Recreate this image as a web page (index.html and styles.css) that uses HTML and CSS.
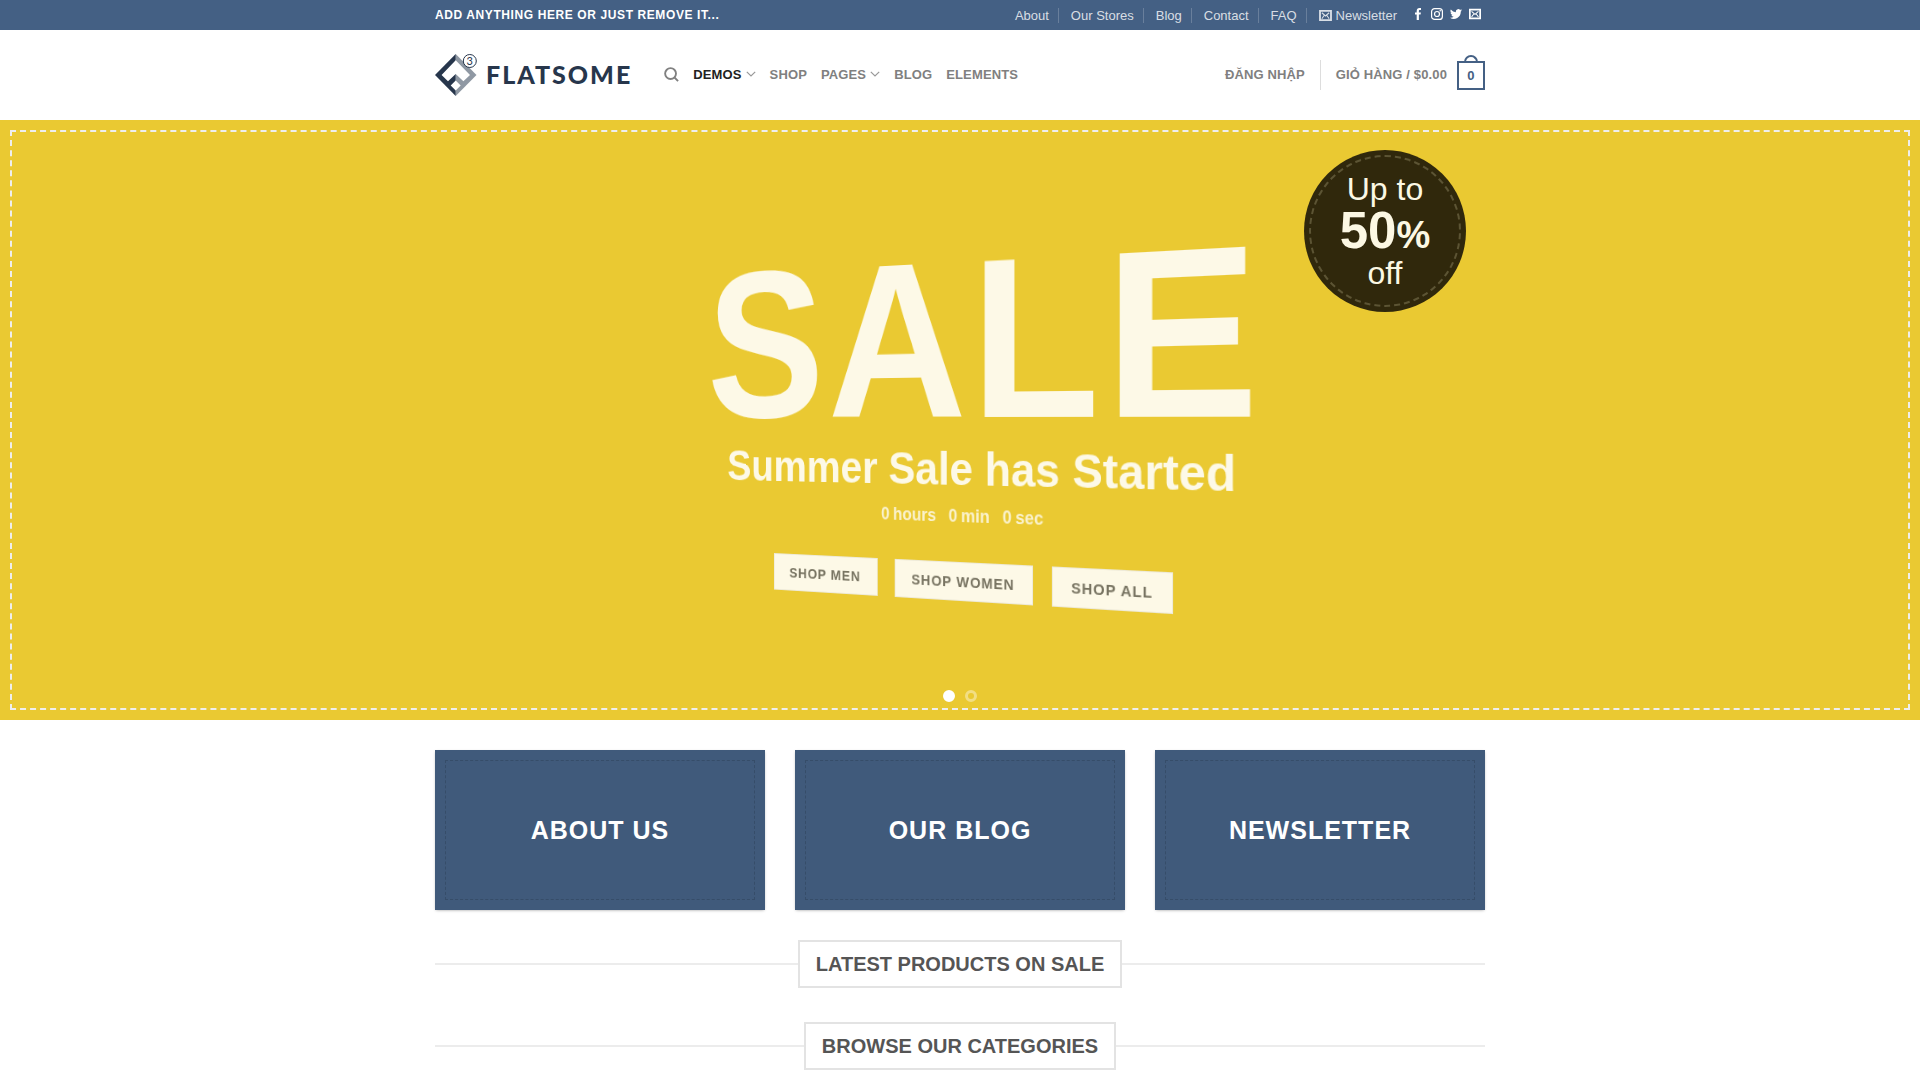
FILE: index.html
```html
<!DOCTYPE html>
<html lang="vi">
<head>
<meta charset="utf-8">
<meta name="viewport" content="width=device-width, initial-scale=1">
<title>Flatsome</title>
<link rel="stylesheet" href="styles.css">
</head>
<body>
<svg class="sprite" aria-hidden="true">
  <symbol id="envelope" viewBox="0 0 14 12">
    <path fill="none" stroke="currentColor" stroke-width="2" d="M1 1h12v10H1z"/>
    <path fill="none" stroke="currentColor" stroke-width="1.200" d="M3 3l4 3.500 4-3.500M3 9.500l2.500-3.500M11 9.500L8.500 6"/>
  </symbol>
  <symbol id="chevron" viewBox="0 0 10 6">
    <path fill="none" stroke="currentColor" stroke-width="1.200" d="M.8.8L5 5 9.200.8"/>
  </symbol>
</svg>
<header>
  <div class="topbar">
    <div class="container topbar-row">
      <strong class="topbar-note">ADD ANYTHING HERE OR JUST REMOVE IT...</strong>
      <nav class="topbar-nav" aria-label="Top">
        <a href="#">About</a>
        <a href="#">Our Stores</a>
        <a href="#">Blog</a>
        <a href="#">Contact</a>
        <a href="#">FAQ</a>
        <a href="#"><svg class="mail-icon"><use href="#envelope"/></svg>Newsletter</a>
      </nav>
      <div class="social">
        <a href="#" aria-label="Facebook"><svg viewBox="0 0 12 12"><path fill="currentColor" d="M4.700 12V6.600H3V4.400h1.700V2.900C4.700 1 5.800 0 7.400 0c.8 0 1.400.1 1.600.1V2H7.900c-.9 0-1 .4-1 1v1.400h2L8.600 6.600H6.900V12z"/></svg></a>
        <a href="#" aria-label="Instagram"><svg viewBox="0 0 12 12"><rect x=".6" y=".6" width="10.800" height="10.800" rx="3" fill="none" stroke="currentColor" stroke-width="1.200"/><circle cx="6" cy="6" r="2.500" fill="none" stroke="currentColor" stroke-width="1.200"/><circle cx="9.200" cy="2.800" r=".8" fill="currentColor"/></svg></a>
        <a href="#" aria-label="Twitter"><svg viewBox="0 0 24 24"><path fill="currentColor" d="M24 4.600a10 10 0 0 1-2.800.8 4.900 4.900 0 0 0 2.200-2.700 10 10 0 0 1-3.100 1.200 4.900 4.900 0 0 0-8.400 4.500A14 14 0 0 1 1.700 3.100a4.900 4.900 0 0 0 1.500 6.600 4.900 4.900 0 0 1-2.200-.6v.1a4.900 4.900 0 0 0 3.900 4.800 5 5 0 0 1-2.200.1 4.900 4.900 0 0 0 4.600 3.400A9.900 9.900 0 0 1 0 19.500a14 14 0 0 0 21.500-12.400A10 10 0 0 0 24 4.600z"/></svg></a>
        <a href="#" aria-label="Email"><svg><use href="#envelope"/></svg></a>
      </div>
    </div>
  </div>
  <div class="container masthead">
    <a class="logo" href="#" aria-label="Flatsome">
      <svg viewBox="0 0 44 44" class="logo-mark" aria-hidden="true">
        <path fill="#8f98a3" d="M20.700 1l20.800 21-20.800 21z"/>
        <path fill="#27364c" d="M20.700 1v42L0 22z"/>
        <path fill="#fff" d="M20.700 7.300L35 22l-6.600 6.300-7.700-7.300-7.700 7.300L6.600 22z"/>
        <path fill="#fff" d="M20.700 27.500l5 4.900-5 5-5-5z"/>
        <circle cx="34.800" cy="8" r="6.500" fill="#fff" stroke="#27364c" stroke-width="1"/>
        <text x="34.800" y="12" text-anchor="middle" class="logo-version">3</text>
      </svg>
      <span class="logo-text">FLATSOME</span>
    </a>
    <nav class="main-nav" aria-label="Main">
      <a href="#" aria-label="Search"><svg class="search-icon" viewBox="0 0 16 16"><g fill="none" stroke="currentColor" stroke-width="2"><circle cx="7" cy="7" r="5.800"/><path d="M11.200 11.200L15 15"/></g></svg></a>
      <a href="#" class="active">DEMOS<svg class="chevron"><use href="#chevron"/></svg></a>
      <a href="#">SHOP</a>
      <a href="#">PAGES<svg class="chevron"><use href="#chevron"/></svg></a>
      <a href="#">BLOG</a>
      <a href="#">ELEMENTS</a>
    </nav>
    <nav class="account-nav" aria-label="Account">
      <a href="#"><span class="account-label">ĐĂNG NHẬP</span></a>
      <a href="#" class="cart"><span class="account-label">GIỎ HÀNG / $0.00</span><span class="cart-count">0</span></a>
    </nav>
  </div>
</header>
<main>
  <section class="hero">
    <div class="hero-frame"></div>
    <div class="container hero-inner">
      <div class="hero-text">
        <h1>SALE</h1>
        <h2>Summer Sale has Started</h2>
        <div class="timer">
          <span><b>0</b>hours</span><span><b>0</b>min</span><span><b>0</b>sec</span>
        </div>
        <div class="hero-buttons">
          <button type="button">SHOP MEN</button>
          <button type="button">SHOP WOMEN</button>
          <button type="button">SHOP ALL</button>
        </div>
      </div>
      <div class="badge">
        <span>Up to</span>
        <strong>50<small>%</small></strong>
        <span>off</span>
      </div>
    </div>
    <div class="dots">
      <button type="button" class="dot dot-current" aria-label="Slide 1"></button>
      <button type="button" class="dot" aria-label="Slide 2"></button>
    </div>
  </section>
  <section class="container cards">
    <a class="card" href="#"><span>ABOUT US</span></a>
    <a class="card" href="#"><span>OUR BLOG</span></a>
    <a class="card" href="#"><span>NEWSLETTER</span></a>
  </section>
  <h3 class="container section-title"><span>LATEST PRODUCTS ON SALE</span></h3>
  <h3 class="container section-title"><span>BROWSE OUR CATEGORIES</span></h3>
</main>
</body>
</html>
```
FILE: styles.css
```css
* { box-sizing: border-box; }
body {
  margin: 0;
  font-family: "Liberation Sans", Arial, sans-serif;
  font-size: 16px;
  color: #777;
  background: #fff;
}
a { color: inherit; text-decoration: none; }
h1, h2, h3 { margin: 0; }
svg { display: block; }
button { font-family: inherit; cursor: pointer; }
.sprite { position: absolute; width: 0; height: 0; }
.container { width: 100%; max-width: 1050px; margin: 0 auto; }

/* Top bar */
.topbar { background: #446084; color: #fff; }
.topbar-row { display: flex; align-items: center; height: 30px; }
.topbar-note { flex: 1; font-size: 12px; letter-spacing: 0.05em; }
.topbar-nav { display: flex; font-size: 13px; line-height: 15px; color: rgba(255, 255, 255, 0.8); }
.topbar-nav a { display: flex; align-items: center; padding: 0 9px 0 12px; }
.topbar-nav a + a { border-left: 1px solid rgba(255, 255, 255, 0.2); }
.topbar-nav a:last-child { padding-right: 0; }
.mail-icon { width: 13px; height: 11px; margin-right: 4px; }
.social { display: flex; gap: 7px; margin: 0 4px 0 15px; padding-bottom: 2px; }
.social svg { width: 12px; height: 12px; }

/* Main header */
.masthead {
  display: flex;
  align-items: center;
  height: 90px;
  font-size: 13px;
  font-weight: bold;
  letter-spacing: 0.01em;
  color: #808080;
}
.logo { display: flex; align-items: center; gap: 7px; margin-right: 32px; color: #27364c; }
.logo-mark { width: 44px; height: 44px; }
.logo-version { font: 11px Lato, sans-serif; fill: #27364c; }
.logo-text { font: 900 25px/30px Lato, sans-serif; letter-spacing: 2px; padding-bottom: 2px; }
.main-nav { display: flex; align-items: center; gap: 14px; flex: 1; padding-bottom: 2px; }
.main-nav a { display: flex; align-items: center; }
.main-nav .active { color: #222; }
.search-icon { width: 15px; height: 15px; }
.chevron { width: 10px; height: 6px; margin-left: 4px; color: #999; }
.account-nav { display: flex; align-items: center; }
.account-nav a { display: flex; align-items: center; height: 30px; }
.account-label { padding-bottom: 2px; }
.account-nav .cart { margin-left: 15px; padding-left: 15px; border-left: 1px solid #ddd; }
.cart-count {
  position: relative;
  width: 28px;
  height: 29px;
  margin-left: 10px;
  border: 2px solid #446084;
  color: #446084;
  line-height: 25px;
  text-align: center;
}
.cart-count::before {
  content: "";
  position: absolute;
  left: 5px;
  bottom: 100%;
  width: 10px;
  height: 6px;
  border: 2px solid #446084;
  border-bottom: 0;
  border-radius: 7px 7px 0 0;
}

/* Hero banner */
.hero { position: relative; background: #eac932; }
.hero-frame { position: absolute; inset: 10px; border: 2px dashed #eee; }
.hero-inner {
  position: relative;
  display: flex;
  justify-content: center;
  align-items: center;
  min-height: 600px;
}
.hero-text {
  text-align: center;
  color: #fff;
  opacity: 0.88;
  padding-bottom: 6px;
  transform: perspective(1500px) rotateY(-27deg);
}
.hero-text h1 { font-size: 225px; line-height: 212px; letter-spacing: 5px; }
.hero-text h2 { font-size: 47px; line-height: 48px; }
.timer {
  display: flex;
  justify-content: center;
  gap: 14px;
  margin-top: 11px;
  font-size: 18px;
  line-height: 24px;
  font-weight: bold;
  opacity: 0.85;
}
.timer b { margin-right: 4px; }
.hero-buttons { display: flex; justify-content: center; gap: 20px; margin-top: 34px; }
.hero-buttons button {
  height: 39px;
  padding: 0 19px;
  border: 1px solid #eee;
  background: #fff;
  color: #666;
  font-size: 15px;
  font-weight: bold;
  letter-spacing: 1px;
}
.badge {
  position: absolute;
  top: 30px;
  right: 19px;
  display: flex;
  flex-direction: column;
  align-items: center;
  justify-content: center;
  width: 162px;
  height: 162px;
  border-radius: 50%;
  background: #30280c;
  color: #fcf8e4;
  font-size: 32px;
  line-height: 36px;
}
.badge::before {
  content: "";
  position: absolute;
  inset: 5px;
  border: 2px dashed #5c5434;
  border-radius: 50%;
}
.badge strong { font-size: 51px; line-height: 48px; }
.badge small { font-size: 38px; line-height: 1; }
.dots {
  position: absolute;
  left: 0;
  right: 0;
  bottom: 18px;
  display: flex;
  justify-content: center;
  gap: 10px;
}
.dot {
  width: 12px;
  height: 12px;
  padding: 0;
  border: 3px solid #fff;
  border-radius: 50%;
  background: none;
  opacity: 0.4;
}
.dot-current { background: #fff; opacity: 1; }

/* Link cards */
.cards { display: grid; grid-template-columns: repeat(3, 1fr); gap: 30px; padding: 30px 0; }
.card {
  display: grid;
  height: 160px;
  padding: 10px;
  background: #405a7b;
  color: #fff;
  font-size: 25px;
  font-weight: bold;
  letter-spacing: 1px;
  box-shadow: 0 1px 3px -1px rgba(0, 0, 0, 0.4);
}
.card span {
  display: grid;
  place-items: center;
  border: 1px dashed #364d69;
}

/* Section titles */
.section-title {
  display: flex;
  align-items: center;
  margin-bottom: 34px;
  color: #555;
  font-size: 20px;
  line-height: 24px;
}
.section-title::before, .section-title::after { content: ""; flex: 1; height: 2px; background: #ececec; }
.section-title span { padding: 10px 16px; border: 2px solid #e3e3e3; }
```
